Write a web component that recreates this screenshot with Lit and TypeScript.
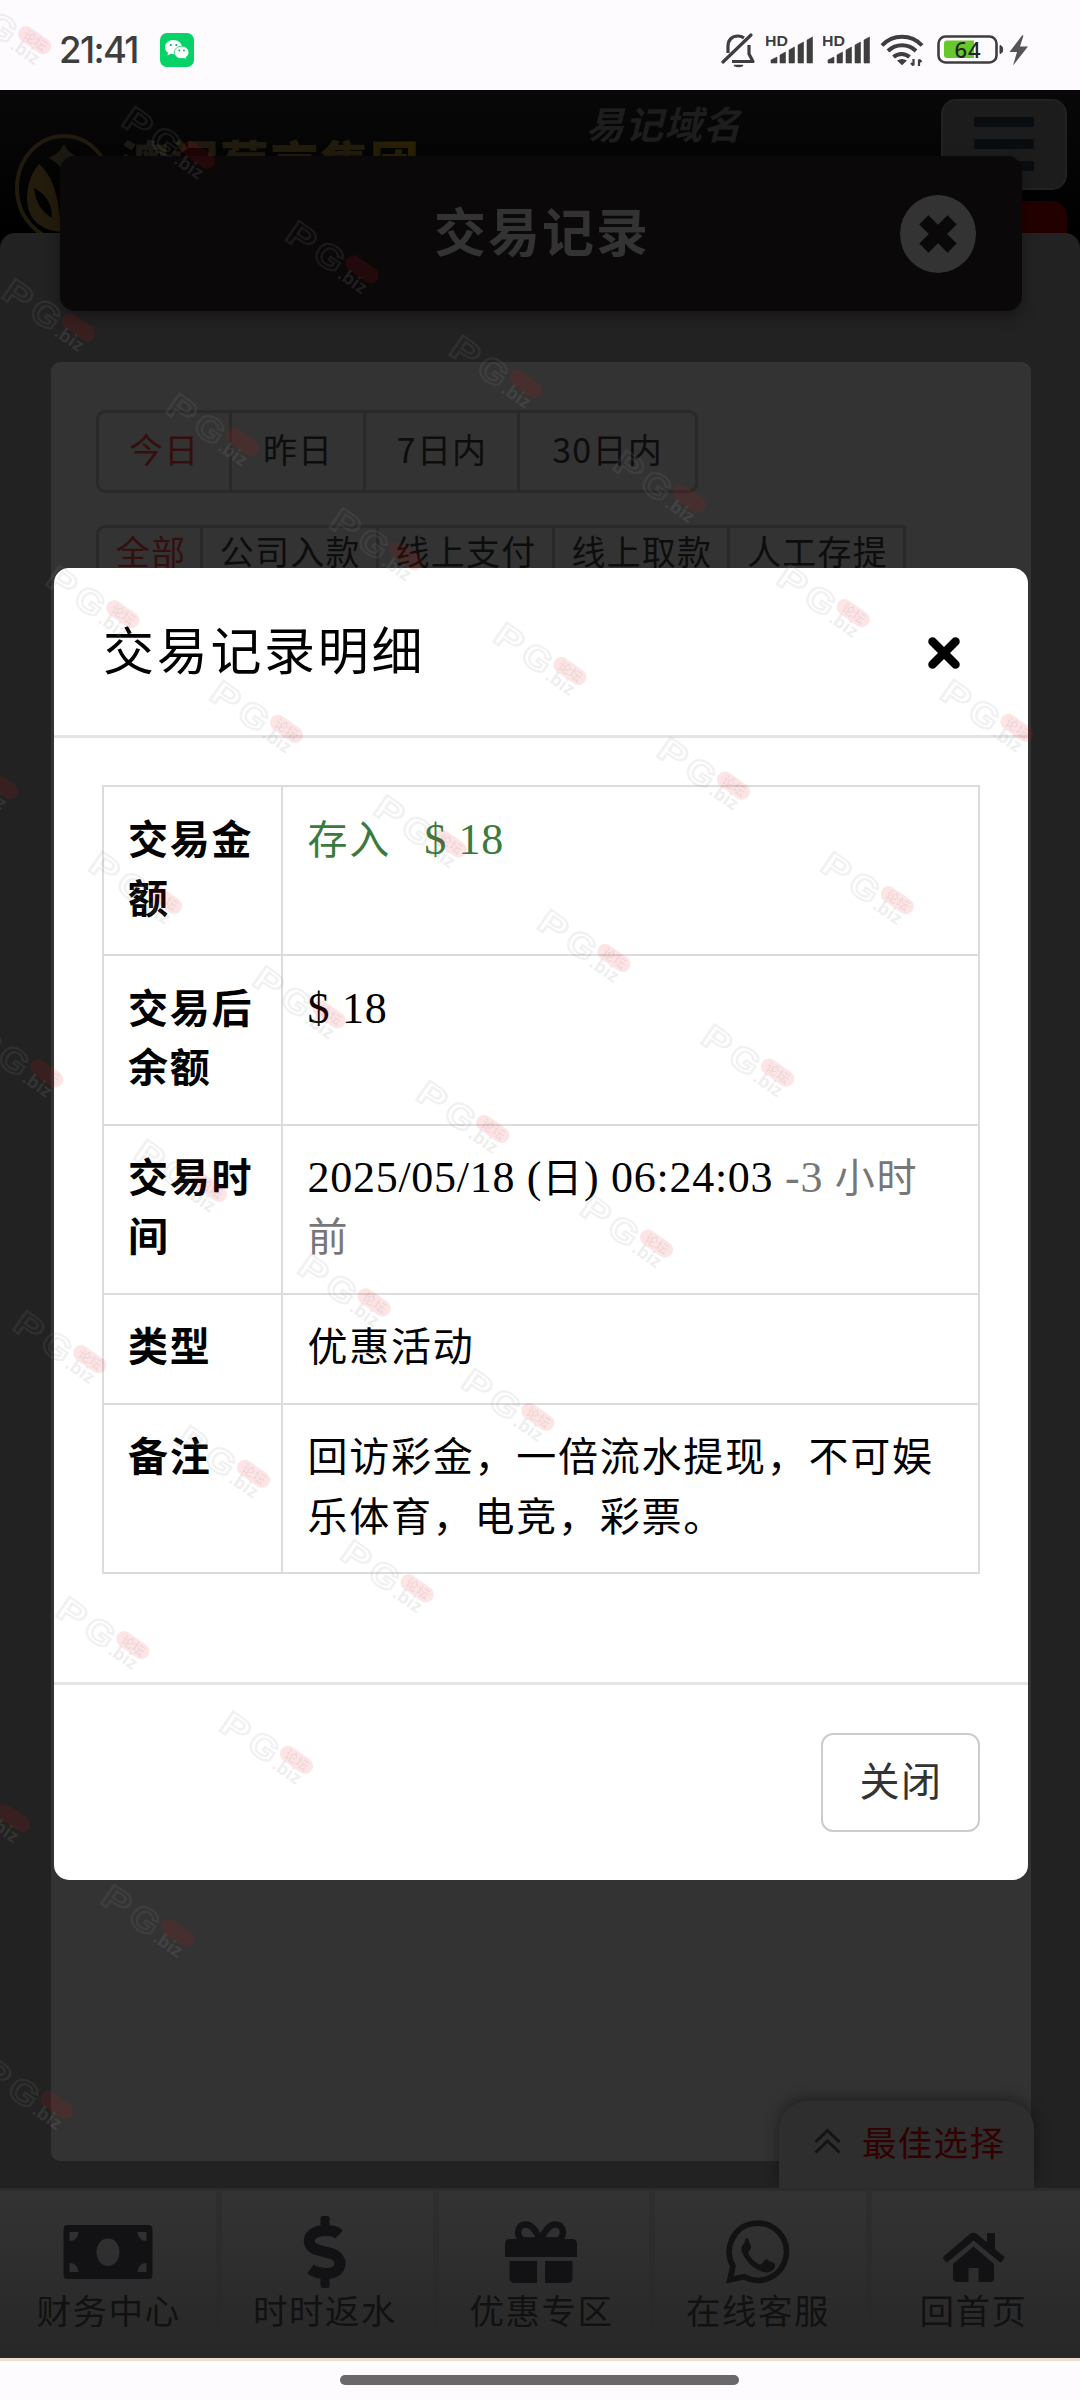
import { LitElement, html, css, svg } from "lit";
import { customElement } from "lit/decorators.js";

const CJK = css`"Noto Sans CJK SC", "Noto Sans", sans-serif`;

@customElement("status-bar")
class StatusBar extends LitElement {
  static styles = css`
    :host { display: flex; align-items: center; justify-content: space-between; box-sizing: border-box;
      height: 90px; padding: 10px 52px 0 59px; background: #fefbff; color: #3e3e3e; }
    .side { display: flex; align-items: center; }
    .clock { font: 500 36.500px/40px Inter, sans-serif; letter-spacing: -1.600px; width: 101px; white-space: nowrap; }
    svg { display: block; flex: none; }
    .hd { font: 700 14px "Liberation Sans", sans-serif; }
    .pct { font: 500 22px "Noto Sans", sans-serif; }
  `;

  private signal() {
    const bars = [[5, 57, 6], [14, 52, 5.5], [23, 47, 5.5], [32, 42, 5.5], [41, 37, 5.5]];
    return html`<svg width="56.5" height="40" viewBox="0 30 56.5 40" fill="#3e3e3e">
      <text class="hd" x="-1" y="45.500" textLength="23" lengthAdjust="spacingAndGlyphs">HD</text>
      ${bars.map(([x, y, w]) => svg`<path d="M${x} ${y + 3}L${x + w} ${y}V63H${x}Z" stroke="#3e3e3e" stroke-width=".6" stroke-linejoin="round"></path>`)}
    </svg>`;
  }

  render() {
    return html`
      <div class="side">
        <span class="clock">21:41</span>
        <svg width="34" height="34" viewBox="0 0 34 34">
          <rect width="34" height="34" rx="7" fill="#06d268"></rect>
          <path d="M13.500 7C8.800 7 5 10.200 5 14.200c0 2.300 1.200 4.200 3.100 5.500L7.400 22.500l3.200-1.700c1 .3 2 .4 3 .4C18.200 21.200 22 18 22 14.200S18.200 7 13.500 7Z" fill="#fff"></path>
          <path d="M21.600 13.200c-4 0-7.300 2.700-7.300 6.200s3.300 6.200 7.300 6.200c.9 0 1.700-.1 2.500-.4l2.500 1.400-.6-2.300c1.800-1.100 2.900-2.900 2.900-4.900 0-3.500-3.300-6.200-7.300-6.200Z" fill="#fff" stroke="#06d268" stroke-width=".8"></path>
          <g fill="#06b457"><circle cx="10.800" cy="12" r="1.100"></circle><circle cx="16.400" cy="12" r="1.100"></circle><circle cx="19.300" cy="17.500" r=".9"></circle><circle cx="24" cy="17.500" r=".9"></circle></g>
        </svg>
      </div>
      <div class="side">
        <svg width="45" height="40" viewBox="721 30 45 40" fill="none" stroke="#3e3e3e" stroke-width="3.200" stroke-linecap="round" stroke-linejoin="round">
          <path d="M723 62 751 35"></path>
          <path d="M728 53v-7c0-6 4-10 10-10 2 0 4 .5 6 1.800M749 45v9l4 7.500H732" stroke-linecap="butt"></path>
          <path d="M734.500 65.500q4 2 8 0z" stroke-width="1.500" fill="#3e3e3e"></path>
        </svg>
        ${this.signal()}${this.signal()}
        <svg width="58" height="40" viewBox="879 30 58 40" fill="none" stroke="#3e3e3e" stroke-width="4">
          <path d="M882 45.500a27.500 27.500 0 0 1 40 0"></path>
          <path d="M888 51a20 20 0 0 1 28 0"></path>
          <path d="M893.500 57a12 12 0 0 1 16 0"></path>
          <path d="M897 60.500q5-3 10 0l-5 4.800z" fill="#3e3e3e" stroke="none"></path>
          <path d="M913.500 59v6.500m-2.500-2.500 2.500 2.500M919 66v-6.500m2.500 2.500-2.500-2.500" stroke-width="2.200"></path>
        </svg>
        <svg width="91" height="40" viewBox="937 30 91 40">
          <rect x="938.500" y="36.500" width="58" height="26" rx="7" fill="none" stroke="#3e3e3e" stroke-width="2.600"></rect>
          <path d="M947 40.500h27V58h-27a3 3 0 0 1-3-3V43.500a3 3 0 0 1 3-3Z" fill="#66c82c"></path>
          <path d="M1000 45.500c3.500 0 3.500 8 0 8z" fill="#3e3e3e" stroke="#3e3e3e" stroke-width="1"></path>
          <text class="pct" x="954.500" y="57.500" fill="#222" textLength="26">64</text>
          <path d="M1022 35.500 1009.500 52h7.500l-4 13.500L1028 46.500h-8l3.500-11z" fill="#555"></path>
        </svg>
      </div>`;
  }
}

@customElement("site-header")
class SiteHeader extends LitElement {
  static styles = css`
    :host { display: flex; align-items: flex-start; height: 143px; background: linear-gradient(#080808, #000);
      padding-left: 15px; box-sizing: border-box; overflow: hidden; }
    .mark { margin-top: 44px; flex: none; }
    .brand { width: 472px; margin: 42px 0 0 7px; box-sizing: border-box; font: 900 49px/58px ${CJK}; letter-spacing: 1px;
      background: linear-gradient(90deg, #1c1a14, #221c0a 50%, #2c2102 64%); -webkit-background-clip: text; color: transparent; white-space: nowrap; }
    .domain { margin: 9px 0 0 -6px; font: italic 700 38px/48px ${CJK}; letter-spacing: 1px; color: #1d1d1d; white-space: nowrap; }
    .right { margin-left: auto; margin-right: 13px; display: flex; flex-direction: column; align-items: flex-end; gap: 11px; padding-top: 9px; }
    .menu { width: 126px; height: 91px; box-sizing: border-box; border: 2px solid #222; border-radius: 15px; background: #1c1c1c;
      display: flex; flex-direction: column; gap: 12px; align-items: center; padding-top: 16px; }
    .menu i { width: 60px; height: 10px; border-radius: 2px; background: #0a0d10; flex: none; }
    .red { width: 110px; height: 60px; border-radius: 15px; background: #230000; }
  `;
  render() {
    return html`
      <svg class="mark" width="98" height="108" viewBox="0 0 98 108">
        <ellipse cx="49" cy="54" rx="47" ry="52" fill="none" stroke="#211b0e" stroke-width="4"></ellipse>
        <path d="M49 10c4 8 9 11 16 14-10 4-14 10-16 20-2-10-6-16-16-20 7-3 12-6 16-14Z" fill="#1b1912"></path>
        <path d="M24 30c14 12 20 32 22 68C22 96 12 82 12 64c0-14 5-26 12-34Z" fill="#231c0d"></path>
        <path d="M19 54c12 6 18 16 18 30-12-8-16-16-18-30Z" fill="#020202"></path>
      </svg>
      <div class="brand">澳门葡京集团</div>
      <div class="domain">易记域名</div>
      <div class="right"><div class="menu"><i></i><i></i><i></i></div><div class="red"></div></div>`;
  }
}

@customElement("filter-tabs")
class FilterTabs extends LitElement {
  static properties = { items: { type: Array }, compact: { type: Boolean, reflect: true } };
  declare items: string[];
  declare compact: boolean;
  static styles = css`
    :host { display: inline-flex; box-sizing: border-box; border: 3px solid #292929; border-radius: 9px; height: 83px; }
    .tab { box-sizing: border-box; display: flex; align-items: center; justify-content: center; padding: 0 30px 5px 30.500px;
      border-left: 3px solid #292929; font: 400 34px/50px ${CJK}; letter-spacing: 1.200px; color: #0d0d0d; white-space: nowrap; }
    .tab:first-child { border-left: 0; color: #330f0e; padding-left: 30px; }
    .tab:nth-child(4) { padding-left: 32px; padding-right: 32px; }
    :host([compact]) { border-radius: 9px 0 0 9px; }
    :host([compact]) .tab { padding: 0 15.300px 0 16.700px; align-items: flex-start; margin-top: -2px; }
    :host([compact]) .tab:first-child { padding-right: 14px; }
  `;
  render() {
    return html`${this.items.map((t) => html`<div class="tab">${t}</div>`)}`;
  }
}

interface Detail { label: string; value: unknown; tall: boolean; }

@customElement("detail-dialog")
class DetailDialog extends LitElement {
  static styles = css`
    :host { display: flex; flex-direction: column; width: 974px; height: 1312px; background: #fff; border-radius: 15px;
      font: 400 40px/59.200px ${CJK}; letter-spacing: 1.500px; color: #000; overflow: hidden; }
    .head { display: flex; align-items: center; justify-content: space-between; box-sizing: border-box; height: 170px;
      border-bottom: 3px solid #e4e4e4; padding: 0 67px 0 49px; }
    .head h2 { margin: 0 0 7px; font-weight: 400; font-size: 51px; letter-spacing: 2.700px; line-height: 70px; }
    .head svg { margin-top: 3px; }
    .body { padding: 47px 48px 0; flex: 1; }
    table { width: 878px; border-collapse: collapse; table-layout: fixed; }
    th, td { border: 2px solid #dcdcdc; padding: 20.500px 24px 25px; text-align: left; vertical-align: top; box-sizing: border-box; }
    th { width: 179px; font-weight: 700; padding-right: 10px; letter-spacing: 1.700px; }
    td { letter-spacing: 1.750px; padding-left: 24.500px; }
    tr { height: 110px; }
    tr.tall { height: 169.300px; }
    .num { font-family: "Liberation Serif", serif; font-size: 44px; letter-spacing: 0.720px; line-height: 40px; }
    .in { color: #3b7a3e; }
    .in .num { margin-left: -2px; }
    .ago { color: #777; }
    .foot { border-top: 3px solid #e4e4e4; height: 198px; box-sizing: border-box; display: flex; justify-content: flex-end; align-items: flex-start; padding: 48px 48px 0; }
    button { width: 159px; height: 99px; background: #fff; border: 2px solid #ccc; border-radius: 12px; padding: 0 0 5px 1px;
      font: inherit; letter-spacing: inherit; color: #333; }
  `;

  private rows: Detail[] = [
    { label: "交易金额", tall: true, value: html`<span class="in">存入<span class="num">&nbsp; &nbsp;$ 18</span></span>` },
    { label: "交易后余额", tall: true, value: html`<span class="num">$ 18</span>` },
    { label: "交易时间", tall: true, value: html`<span class="num">2025/05/18 (</span>日<span class="num">) 06:24:03 </span><span class="ago"><span class="num">-3 </span>小时前</span>` },
    { label: "类型", tall: false, value: "优惠活动" },
    { label: "备注", tall: true, value: "回访彩金，一倍流水提现，不可娱乐体育，电竞，彩票。" },
  ];

  render() {
    return html`
      <div class="head"><h2>交易记录明细</h2>
        <svg width="34" height="34" viewBox="0 0 34 34"><path d="M5.500 5.500 28.500 28.500M28.500 5.500 5.500 28.500" stroke="#000" stroke-width="8.500" stroke-linecap="round"></path></svg>
      </div>
      <div class="body"><table><tbody>
        ${this.rows.map((r) => html`<tr class=${r.tall ? "tall" : "short"}><th>${r.label}</th><td>${r.value}</td></tr>`)}
      </tbody></table></div>
      <div class="foot"><button>关闭</button></div>`;
  }
}

const ICONS: Record<string, unknown> = {
  money: svg`<path fill-rule="evenodd" d="M68 2225h81q4 0 4 4v46q0 4-4 4H68q-4 0-4-4v-46q0-4 4-4ZM70 2232v9q8 0 9-9ZM138 2232q1 9 9 9v-9ZM70 2263v9h9q-1-9-9-9ZM147 2263q-8 0-9 9h9ZM108.500 2238.500c-7 0-11.500 6-11.500 13.500s4.500 14 11.500 14 11.500-6.500 11.500-14-4.500-13.500-11.500-13.500Z"></path>`,
  dollar: svg`<path fill="none" stroke="#121214" stroke-width="11" d="M339 2234.500C335 2230.500 330 2230.500 325 2230.500C306 2230.500 305 2247 318 2250L331 2253.500C345 2258 342 2273.500 327 2273.500C320 2273.500 316 2273 310.500 2269"></path><rect x="320.500" y="2216" width="9" height="18" rx="2"></rect><rect x="320.500" y="2270" width="9" height="18" rx="2"></rect>`,
  gift: svg`<path d="M510 2239h62q5 0 5 5v13H505v-13q0-5 5-5ZM509.500 2261H537v22h-22.500q-5 0-5-5ZM545 2261h27.500v17q0 5-5 5H545Z"></path><path fill="none" stroke="#121214" stroke-width="6.500" d="M541 2240c-6-10-9-15.500-15.500-15.500-5 0-7.500 4-7.500 8s3 8 7 8h31c4 0 7-4 7-8s-2.500-8-7.500-8c-6.500 0-9.500 5.500-15.500 15.500Z"></path><rect x="536.500" y="2239" width="9" height="18"></rect>`,
  chat: svg`<path fill="none" stroke="#121214" stroke-width="5.600" d="M729.800 2279.800 733 2266A28.600 28.600 0 1 1 744 2276.800Z"></path><path d="M744.500 2243c-4 4-4 7-1 12.500 5 9 13 15 22 17 5 .5 9-3 9.500-6 .3-2 0-3-1-3.500l-7-3.300c-1.500-.5-2.500 0-3.200 1.500l-2 2.500c-1 1-2 1-3 .5-4.500-2.500-8-6-10.300-10.500-.5-1 0-2 .8-3l1.500-2c.5-1 .5-2 0-3l-2.800-7c-1-1.500-2.500-1-3.500 4.300Z"></path>`,
  home: svg`<path d="M974 2246.500 994.500 2264v14q0 4-4 4H979v-13q0-1-1-1h-8q-1 0-1 1v13h-11.500q-4 0-4-4v-14Z"></path><path d="M944 2256.500 970.500 2234q3.500-2.500 7 0L987.500 2242.500V2233H995.500V2249L1004.500 2256.500q1 1 0 2.200l-2.500 3q-1 1-2.200 0L974 2240.500 948.500 2261.700q-1.200 1-2.200 0l-2.500-3q-1-1.200.2-2.200Z"></path>`,
};

@customElement("bottom-nav")
class BottomNav extends LitElement {
  static styles = css`
    :host { display: grid; grid-template-columns: 216px 217px 216px 217px 214px; height: 170px; box-sizing: border-box; border-top: 3px solid #2c2c2c;
      background: linear-gradient(#333, #272727); }
    .item { box-sizing: border-box; display: flex; flex-direction: column; align-items: center; color: #121214; }
    .item + .item { border-left: 6px solid rgba(40, 40, 40, 0.400); padding-right: 6px; }
    .item svg { width: 100px; height: 80px; margin-top: 21px; fill: #121214; flex: none; }
    .label { font: 400 34.500px/50px ${CJK}; letter-spacing: 1.500px; margin: -8px -1px 0 0; white-space: nowrap; color: #111; }
  `;
  private items: [string, string, string][] = [
    ["money", "财务中心", "58.500 2212 100 80"],
    ["dollar", "时时返水", "275 2212 100 80"],
    ["gift", "优惠专区", "491 2212 100 80"],
    ["chat", "在线客服", "708 2212 100 80"],
    ["home", "回首页", "923.500 2212 100 80"],
  ];
  render() {
    return html`${this.items.map(([k, t, box]) => html`<div class="item"><svg viewBox=${box}>${ICONS[k]}</svg><span class="label">${t}</span></div>`)}`;
  }
}

@customElement("watermark-layer")
class WatermarkLayer extends LitElement {
  static styles = css`
    :host { display: block; pointer-events: none; }
    .pg { font: 700 34px "Liberation Sans", sans-serif; fill: rgba(130, 130, 130, 0.020); stroke: rgba(145, 145, 145, 0.150); stroke-width: 2.200px; }
    .biz { font: 700 18px "Noto Sans", sans-serif; fill: rgba(150, 150, 150, 0.160); }
    .tag { font: 700 13px ${CJK}; fill: rgba(60, 20, 30, 0.080); }
    rect { fill: rgba(240, 20, 30, 0.110); }
  `;
  private rows = [
    { x: -42, y: -10, n: 7 }, { x: 2, y: 277, n: 6 }, { x: 46, y: 564, n: 5 },
    { x: -75, y: 735, n: 5 }, { x: -30, y: 1023, n: 4 }, { x: 13, y: 1309, n: 3 },
    { x: 56, y: 1595, n: 2 }, { x: -63, y: 1768, n: 2 }, { x: -20, y: 2055, n: 1 },
  ];
  render() {
    const marks = this.rows.flatMap((r) => Array.from({ length: r.n }, (_, i) => [r.x + i * 163.700 - 0.500, r.y + i * 114.600 + 1]));
    return html`<svg width="1080" height="2400" viewBox="0 0 1080 2400">
      ${marks.map(([x, y]) => svg`<g transform="translate(${x} ${y}) rotate(35)">
        <text class="pg" x="9.500" y="16" textLength="28" lengthAdjust="spacingAndGlyphs">P</text>
        <text class="pg" x="43" y="16" textLength="29" lengthAdjust="spacingAndGlyphs">G</text>
        <rect x="73" y="-12" width="37" height="16" rx="8"></rect>
        <text class="tag" x="79" y="1">论坛</text>
        <text class="biz" x="75" y="17">.biz</text></g>`)}
    </svg>`;
  }
}

@customElement("app-root")
class AppRoot extends LitElement {
  static styles = css`
    :host { display: block; position: relative; width: 1080px; height: 2400px; overflow: hidden; background: #fefbff; }
    .page { height: 2268px; background: #000; position: relative; display: flex; flex-direction: column; }
    .panel { flex: 1; background: #222; border-radius: 15px 15px 0 0; padding: 129px 49px 27px 51px; display: flex; }
    .card { flex: 1; background: #333; border-radius: 9px; padding: 48px 45px; display: flex; flex-direction: column; align-items: flex-start; gap: 32px; }
    .title { position: absolute; left: 60px; top: 66px; width: 962px; height: 155px; box-sizing: border-box; border-radius: 15px; background: #0a0809;
      box-shadow: 0 6px 15px rgba(0, 0, 0, 0.350); display: flex; align-items: center; justify-content: center; }
    .title h1 { margin: 0 0 7px 2px; font: 700 52px/70px ${CJK}; letter-spacing: 2px; color: #333; }
    .title svg { position: absolute; right: 46px; top: 39px; }
    .best { position: absolute; left: 779px; bottom: 170px; width: 255px; height: 87px; box-sizing: border-box; border-radius: 28px 28px 0 0; background: #2e2e2e;
      box-shadow: 0 -3px 15px rgba(0, 0, 0, 0.400); clip-path: inset(-30px -30px 0 -30px);
      display: flex; align-items: center; gap: 21px; padding-left: 35px; font: 400 34.500px/50px ${CJK}; letter-spacing: 1.300px; color: #310101; }
    .best svg { margin-bottom: 6px; }
    .best span { margin-bottom: 7px; }
    .line { height: 3px; background: #ece0d2; }
    .gesture { height: 39px; display: flex; justify-content: center; align-items: center; padding: 0 2px 2px 0; box-sizing: border-box; }
    .gesture i { width: 399px; height: 10px; border-radius: 5px; background: #696969; }
    detail-dialog { position: absolute; left: 54px; top: 568px; }
    watermark-layer { position: absolute; left: 0; top: 0; }
  `;
  render() {
    return html`
      <status-bar></status-bar>
      <div class="page">
        <site-header></site-header>
        <div class="panel"><div class="card">
          <filter-tabs .items=${["今日", "昨日", "7日内", "30日内"]}></filter-tabs>
          <filter-tabs compact .items=${["全部", "公司入款", "线上支付", "线上取款", "人工存提"]}></filter-tabs>
        </div></div>
        <bottom-nav></bottom-nav>
        <div class="title"><h1>交易记录</h1>
          <svg width="76" height="78" viewBox="0 0 76 78"><ellipse cx="38" cy="39" rx="38" ry="39" fill="#333"></ellipse><path d="M28.500 29.500 47.500 48.500M47.500 29.500 28.500 48.500" stroke="#0a0809" stroke-width="13" stroke-linecap="square"></path></svg>
        </div>
        <div class="best">
          <svg width="27" height="27" viewBox="0 0 27 27" fill="none" stroke="#141414" stroke-width="3"><path d="M1.500 14 13.500 2.500 25.500 14M1.500 24.500 13.500 13 25.500 24.500"></path></svg>
          <span>最佳选择</span>
        </div>
      </div>
      <div class="line"></div>
      <div class="gesture"><i></i></div>
      <detail-dialog></detail-dialog>
      <watermark-layer></watermark-layer>`;
  }
}
